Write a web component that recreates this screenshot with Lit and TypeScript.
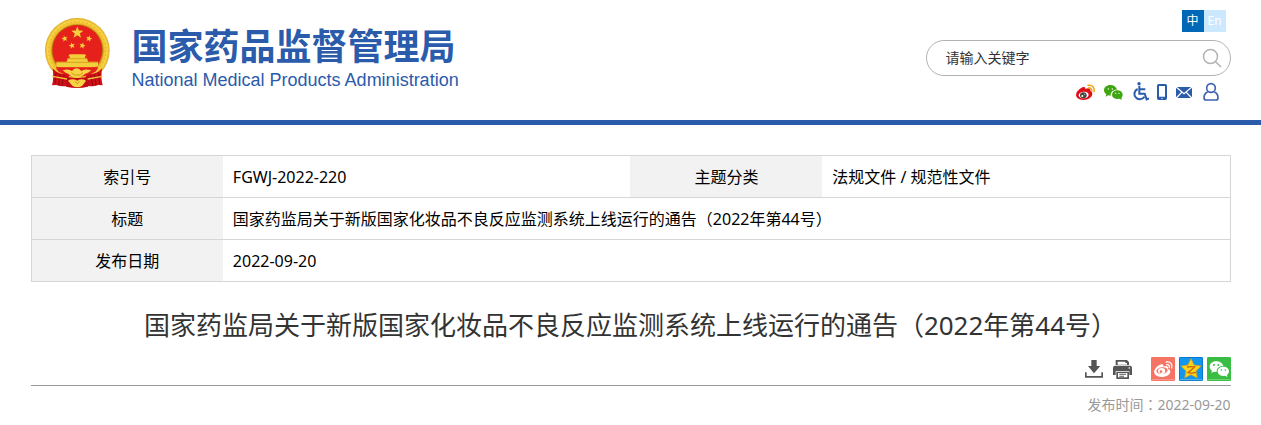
import { LitElement, html, css, svg } from "lit";
import { customElement } from "lit/decorators.js";

const star = (cx: number, cy: number, r: number, turn = 0, inner = 0.42) =>
  Array.from({ length: 10 }, (_, i) => {
    const a = ((-90 + turn + i * 36) * Math.PI) / 180;
    const d = i % 2 ? r * inner : r;
    return `${(cx + d * Math.cos(a)).toFixed(2)},${(cy + d * Math.sin(a)).toFixed(2)}`;
  }).join(" ");

const emblem = html`
  <svg class="emblem" width="66" height="71" viewBox="42 39 198 213" aria-hidden="true">
    <defs>
      <radialGradient id="gold" gradientUnits="userSpaceOnUse" cx="142" cy="136" r="98">
        <stop offset=".77" stop-color="#b8860f" />
        <stop offset=".82" stop-color="#f0bf2e" />
        <stop offset=".91" stop-color="#f8d748" />
        <stop offset="1" stop-color="#d9a220" />
      </radialGradient>
    </defs>
    <circle cx="142" cy="136" r="97" fill="url(#gold)" />
    <circle cx="142" cy="136" r="86" fill="none" stroke="#d79c18" stroke-width="4" stroke-dasharray="5 7" opacity=".4" />
    <circle cx="142" cy="135" r="75" fill="#e6211b" />
    <g fill="#f3cf3b">
      <polygon points=${star(142, 83, 19)} />
      <polygon points=${star(104, 101, 10, -15)} />
      <polygon points=${star(177, 101, 10, 15)} />
      <polygon points=${star(126, 122, 10, -15)} />
      <polygon points=${star(157, 122, 10, 15)} />
      <path d="M119 148h46l4 6h-4v6h6l3 10h30v13q-12 5-20 5H96q-10 0-17-5v-13h31l3-10h6v-6h-4z" />
    </g>
    <path d="M112 161h60M80 172h124" stroke="#c98c15" stroke-width="2" />
    <path d="M77 187h128l-7 12q-26 17-56 17t-58-17z" fill="#e6211b" />
    <path d="M68 190q18 20 40 16l9 6-4 30q-18 5-34-2l-13 1q6-20 2-51zM216 190q-18 20-40 16l-9 6 4 30q18 5 34-2l13 1q-6-20-2-51z" fill="#cf1019" />
    <path d="M78 204l-3 32M91 209l-5 31M102 210l-6 32M206 204l3 32M193 209l5 31M182 210l6 32" stroke="#8e0710" stroke-width="3" />
    <path d="M104 214q18 5 38 5t38-5l-6 31q-32 8-66 0z" fill="#c20d15" />
    <path d="M98 196q18-6 28 2 5-8 14-8t14 8q10-8 30-2l-10 7q-10 2-14 8-8 8-20 8t-20-8q-4-6-13-8z" fill="#f6d445" />
    <path d="M114 227q14-8 28 0 12-8 26 0l-11 15q-15 10-30 0z" fill="#f6d445" />
    <path d="M124 203l9 7h17l9-7M134 229l8 7 7-7" fill="none" stroke="#d1941a" stroke-width="3" />
    <path d="M67 214l44 8M217 214l-44 8" stroke="#f0c53b" stroke-width="4" />
  </svg>
`;

const links = [
  {
    label: "微博", w: 20, box: "498 243 60 63",
    art: svg`
      <path d="M498 285q1-11 11-18 8-7 14-6 4 2 3 6 10-5 14 0 2 2 1 5 6 2 6 10 0 8-8 13t-19 5q-11 0-17-5-5-4-5-10z" fill="#e20d15"/>
      <ellipse cx="521" cy="285" rx="15" ry="10" fill="#fff" transform="rotate(-7 521 285)"/>
      <ellipse cx="520" cy="286" rx="10" ry="9" fill="#444"/>
      <circle cx="517" cy="288" r="3" fill="#fff"/><circle cx="524" cy="283" r="1.500" fill="#fff"/>
      <path d="M534 256q10-2 15 4t3 15M536 264q6-1 8 3t1 7" fill="none" stroke="#f3a512" stroke-width="4.500" stroke-linecap="round"/>`,
  },
  {
    label: "微信", w: 20, box: "582 243 60 63",
    art: svg`
      <path d="M601 255c-11 0-19 7-19 16 0 5 3 9 7 12l-2 7 8-4 7 1c-1-12 9-19 19-18-2-8-10-14-20-14z" fill="#3fa60f"/>
      <ellipse cx="622" cy="284" rx="16" ry="13" fill="#3fa60f"/><path d="M626 293l9-1-1 8z" fill="#3fa60f"/>
      <g fill="#fff"><circle cx="595" cy="267" r="2"/><circle cx="607" cy="267" r="2"/><circle cx="617" cy="280" r="2"/><circle cx="627" cy="280" r="2"/></g>`,
  },
  {
    label: "无障碍", w: 17, box: "666 243 51 63",
    art: svg`
      <circle cx="687" cy="251" r="5" fill="#2b5bab"/>
      <path d="M688 257v24h16l6 17 7-3M689 268h17M683 267a16 16 0 1 0 20 23" fill="none" stroke="#2b5bab" stroke-width="6"/>`,
  },
  {
    label: "手机版", w: 11, box: "741 243 33 63",
    art: svg`
      <path fill-rule="evenodd" d="M746 252h20q5 0 5 5v38q0 5-5 5h-20q-5 0-5-5v-38q0-5 5-5zm1 6v32h18v-32z" fill="#2b5bab"/>
      <circle cx="756" cy="295" r="2" fill="#fff"/>`,
  },
  {
    label: "邮箱", w: 16, box: "798 243 48 63",
    art: svg`
      <path d="M798 261h48v33h-48z" fill="#2b5bab"/>
      <path d="M798 261l24 20 24-20M798 295l17-18M846 295l-17-18" fill="none" stroke="#fff" stroke-width="4"/>`,
  },
  {
    label: "个人中心", w: 20, box: "870 243 60 63",
    art: svg`
      <circle cx="903" cy="264" r="13" fill="none" stroke="#3f62b0" stroke-width="5"/>
      <path d="M893 276q-11 5-11 17 0 7 7 7h28q7 0 7-7 0-12-11-17" fill="none" stroke="#3f62b0" stroke-width="5"/>`,
  },
];

const shares = [
  {
    label: "分享到微博",
    art: svg`
      <rect width="72" height="72" rx="4" fill="#f57464"/><path d="M3 68h66" stroke="#fbb4aa" stroke-width="2"/>
      <path d="M9 43q2-10 12-17 9-6 14-4 4 2 2 7 9-4 13 0 3 3 1 7 8 2 7 9-2 12-22 15-25 2-27-17z" fill="#fff"/>
      <ellipse cx="33" cy="41" rx="17" ry="10" fill="#f57464" transform="rotate(-7 33 41)"/>
      <ellipse cx="32" cy="42" rx="11" ry="9" fill="#fff"/><circle cx="30" cy="44" r="4" fill="#f57464"/>
      <path d="M46 15q9-2 14 4t2 14M47 23q5-1 7 2t1 7" fill="none" stroke="#fff" stroke-width="4" stroke-linecap="round"/>`,
  },
  {
    label: "分享到QQ空间",
    art: svg`
      <rect width="72" height="72" rx="4" fill="#1296ee"/><rect x="1.500" y="1.500" width="69" height="69" rx="3" fill="none" stroke="#0b78cb" stroke-width="3"/><path d="M3 68h66" stroke="#8cc9f5" stroke-width="2"/>
      <polygon points=${star(36, 37, 32, 0, 0.5)} fill="#fdd11d" stroke="#d79a13" stroke-width="2" stroke-linejoin="round"/>
      <path d="M24 30q12-2 23 0L27 47q12 3 24-1" fill="none" stroke="#c66a09" stroke-width="4"/>`,
  },
  {
    label: "分享到微信",
    art: svg`
      <rect width="72" height="72" rx="4" fill="#39be43"/><path d="M3 68h66" stroke="#9be0a0" stroke-width="2"/>
      <path d="M27 13C16 13 8 20 8 29c0 5 3 9 7 12l-2 7 8-4 8 1c-1-11 8-19 20-18-2-8-11-14-22-14z" fill="#fff"/>
      <path d="M49 29c10 0 17 6 17 14 0 4-2 8-6 11l1 6-7-4c-13 3-22-4-22-13 0-8 7-14 17-14z" fill="#fff"/>
      <g fill="#39be43"><circle cx="21" cy="24" r="3"/><circle cx="34" cy="24" r="3"/><circle cx="43" cy="39" r="2.500"/><circle cx="55" cy="39" r="2.500"/></g>`,
  },
];

@customElement("app-root")
export class AppRoot extends LitElement {
  static styles = css`
    :host {
      display: block;
      background: #fff;
      color: #000;
      font: 16px/24px "Noto Sans", "Noto Sans CJK SC", sans-serif;
    }
    * { box-sizing: border-box; }
    svg { display: block; }
    a { color: inherit; text-decoration: none; }
    button { padding: 0; border: 0; background: none; cursor: pointer; }
    .header { border-bottom: 5px solid #2b5bab; }
    .wrap { max-width: 1260px; margin: 0 auto; padding: 0 30px; }
    .bar { display: flex; justify-content: space-between; min-height: 120px; }
    .brand { display: flex; align-items: flex-start; gap: 22px; padding: 18px 0 0 13px; color: #2b5bab; }
    .name { display: flex; flex-direction: column; }
    .cn { font: 700 36px/52px "Noto Sans CJK SC", sans-serif; }
    .en { font: 18px/20px "Liberation Sans", sans-serif; }
    .tools { display: flex; flex-direction: column; align-items: flex-end; padding-top: 10px; }
    .langs { display: flex; margin: 0 5px 8px 0; font-size: 12px; line-height: 22px; color: #fff; text-align: center; }
    .lang { width: 22px; background: #cce8ff; }
    .lang.current { background: #0068b7; }
    .search { display: flex; align-items: center; width: 305px; height: 36px; padding: 0 8px 0 19px; border: 1px solid #b2b2b2; border-radius: 18px; }
    .query { flex: 1; min-width: 0; padding: 0; border: 0; outline: 0; background: none; font: 14px/20px "Noto Sans", "Noto Sans CJK SC", sans-serif; color: #333; }
    .query::placeholder { color: #333; opacity: 1; }
    .links { display: flex; gap: 8px; padding: 5px 11px 0 0; }
    .info { width: 100%; margin-top: 30px; border-collapse: collapse; table-layout: fixed; border: 1px solid #d6d6d6; }
    .info tr { border-top: 1px solid #d6d6d6; }
    .info th, .info td { height: 42px; padding: 0; font-weight: 400; }
    .info th { background: #f2f2f2; text-align: center; }
    .info td { padding: 0 10px; }
    .key { width: 16%; }
    .value { width: 34%; }
    .title { margin: 24px 0 12px; font-size: 26px; line-height: 39px; font-weight: 400; color: #333; text-align: center; }
    .actions { display: flex; justify-content: flex-end; gap: 4px; padding-bottom: 4px; border-bottom: 1px solid #999; }
    .print { margin-right: 12px; }
    .date { margin: 9px 0 0; font-size: 14px; line-height: 20px; color: #999; text-align: right; }
    .colon { font-family: "Noto Sans CJK TC", sans-serif; line-height: 1; }
  `;

  render() {
    return html`
      <header class="header">
        <div class="wrap bar">
          <a class="brand" href="#">
            ${emblem}
            <span class="name">
              <span class="cn">国家药品监督管理局</span>
              <span class="en" lang="en">National Medical Products Administration</span>
            </span>
          </a>
          <div class="tools">
            <nav class="langs">
              <a class="lang current" href="#">中</a>
              <a class="lang" href="#">En</a>
            </nav>
            <form class="search" @submit=${(e: Event) => e.preventDefault()}>
              <input class="query" type="text" aria-label="请输入关键字" placeholder="请输入关键字" />
              <button aria-label="搜索">
                <svg width="20" height="20" viewBox="0 0 20 20" fill="none" stroke="#b2b2b2" stroke-width="1.500">
                  <circle cx="8.500" cy="8.500" r="7" /><path d="M13.500 13.500l5.500 5.500" />
                </svg>
              </button>
            </form>
            <nav class="links">
              ${links.map((l) => html`<a href="#" aria-label=${l.label}><svg width=${l.w} height="21" viewBox=${l.box}>${l.art}</svg></a>`)}
            </nav>
          </div>
        </div>
      </header>
      <main class="wrap">
        <table class="info">
          <colgroup><col class="key" /><col class="value" /><col class="key" /><col class="value" /></colgroup>
          <tbody>
            <tr><th scope="row">索引号</th><td>FGWJ-2022-220</td><th scope="row">主题分类</th><td>法规文件 / 规范性文件</td></tr>
            <tr><th scope="row">标题</th><td colspan="3">国家药监局关于新版国家化妆品不良反应监测系统上线运行的通告（2022年第44号）</td></tr>
            <tr><th scope="row">发布日期</th><td colspan="3">2022-09-20</td></tr>
          </tbody>
        </table>
        <h1 class="title">国家药监局关于新版国家化妆品不良反应监测系统上线运行的通告（2022年第44号）</h1>
        <div class="actions">
          <button aria-label="下载">
            <svg width="24" height="24" viewBox="36 36 72 72" fill="#555">
              <path d="M61 45h16v18h11L69 85 51 63h10z" />
              <path d="M42 82h5v11h44V82h5v16H42z" />
            </svg>
          </button>
          <button class="print" aria-label="打印">
            <svg width="24" height="24" viewBox="120 36 72 72" fill="#555">
              <path fill-rule="evenodd" d="M136 45h32l6 7v8h-40V45zm4 5v9h28v-5h-5v-4z" />
              <path d="M132 62h45q6 0 6 6v22h-8V78h-41v12h-8V68q0-6 6-6z" />
              <path fill-rule="evenodd" d="M136 80h38v22h-38zm5 4v13h28V84z" />
              <path d="M145 86h20v3h-20zM145 92h14v3h-14z" />
              <circle cx="175" cy="69" r="2.500" fill="#fff" />
            </svg>
          </button>
          ${shares.map((s) => html`<button aria-label=${s.label}><svg width="24" height="24" viewBox="0 0 72 72">${s.art}</svg></button>`)}
        </div>
        <p class="date">发布时间<span class="colon">：</span><time>2022-09-20</time></p>
      </main>
    `;
  }
}
